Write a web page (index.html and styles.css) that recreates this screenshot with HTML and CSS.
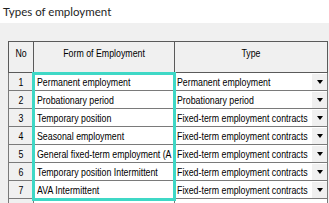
FILE: index.html
```html
<!DOCTYPE html>
<html lang="en">
<head>
    <meta charset="UTF-8">
    <title>Types of employment</title>
    <link rel="stylesheet" href="styles.css">
</head>
<body>

<!-- Section title -->
<div class="title">Types of employment</div>

<!-- Grid panel -->
<div class="panel">
    <div class="grid-wrap">
        <table class="grid">
            <colgroup>
                <col class="c-no">
                <col class="c-form">
                <col class="c-type">
            </colgroup>
            <thead>
                <tr>
                    <th><span class="nt">No</span></th>
                    <th><span class="nt">Form of Employment</span></th>
                    <th><span class="nt">Type</span></th>
                </tr>
            </thead>
            <tbody>
                <tr>
                    <td class="num"><span class="nt">1</span></td>
                    <td class="form"><span class="nt">Permanent employment</span></td>
                    <td><div class="combo"><span class="combo-text"><span class="nt">Permanent employment</span></span><span class="combo-btn"><i></i></span></div></td>
                </tr>
                <tr>
                    <td class="num"><span class="nt">2</span></td>
                    <td class="form"><span class="nt">Probationary period</span></td>
                    <td><div class="combo"><span class="combo-text"><span class="nt">Probationary period</span></span><span class="combo-btn"><i></i></span></div></td>
                </tr>
                <tr>
                    <td class="num"><span class="nt">3</span></td>
                    <td class="form"><span class="nt">Temporary position</span></td>
                    <td><div class="combo"><span class="combo-text"><span class="nt">Fixed-term employment contracts</span></span><span class="combo-btn"><i></i></span></div></td>
                </tr>
                <tr>
                    <td class="num"><span class="nt">4</span></td>
                    <td class="form"><span class="nt">Seasonal employment</span></td>
                    <td><div class="combo"><span class="combo-text"><span class="nt">Fixed-term employment contracts</span></span><span class="combo-btn"><i></i></span></div></td>
                </tr>
                <tr>
                    <td class="num"><span class="nt">5</span></td>
                    <td class="form"><span class="nt">General fixed-term employment (A</span></td>
                    <td><div class="combo"><span class="combo-text"><span class="nt">Fixed-term employment contracts</span></span><span class="combo-btn"><i></i></span></div></td>
                </tr>
                <tr>
                    <td class="num"><span class="nt">6</span></td>
                    <td class="form"><span class="nt">Temporary position Intermittent</span></td>
                    <td><div class="combo"><span class="combo-text"><span class="nt">Fixed-term employment contracts</span></span><span class="combo-btn"><i></i></span></div></td>
                </tr>
                <tr>
                    <td class="num"><span class="nt">7</span></td>
                    <td class="form"><span class="nt">AVA Intermittent</span></td>
                    <td><div class="combo"><span class="combo-text"><span class="nt">Fixed-term employment contracts</span></span><span class="combo-btn"><i></i></span></div></td>
                </tr>
                <tr>
                    <td class="num"></td>
                    <td class="form"></td>
                    <td></td>
                </tr>
            </tbody>
        </table>

        <!-- highlight frame around the form column -->
        <div class="highlight"></div>
    </div>
</div>

</body>
</html>
```

FILE: styles.css
```css
body {
    margin: 0;
    background-color: #fff;
    font-family: "Liberation Sans", Arial, sans-serif;
    font-size: 11px;
    color: #000;
    overflow: hidden;
}
.title {
    height: 23px;
    box-sizing: border-box;
    padding: 5px 0 0 3px;
    font-family: Lato, sans-serif;
    font-size: 11.5px;
    color: #1e1e1e;
}
.panel {
    background-color: #f0f0f0;
    padding: 18px 0 0 8px;
    height: 200px;
}
.grid-wrap {
    position: relative;
    width: 319px;
}
.grid {
    border-collapse: collapse;
    table-layout: fixed;
    width: 319px;
}
.c-no { width: 25px; }
.c-form { width: 141px; }
.c-type { width: 153px; }

/* narrow look of the grid font */
.nt {
    display: inline-block;
    transform: scaleX(0.8);
    transform-origin: left center;
    white-space: nowrap;
}
.grid th .nt,
.grid td.num .nt {
    transform-origin: center center;
}
.grid th {
    height: 31px;
    padding: 5px 0 0 0;
    box-sizing: border-box;
    vertical-align: top;
    font-weight: normal;
    background-color: #f0f0f0;
    border: 1px solid #5a5a5a;
    line-height: 13px;
}
.grid td {
    height: 17px;
    padding: 0;
    border: 1px solid #7a7a7a;
    background-color: #fff;
    white-space: nowrap;
    overflow: hidden;
    line-height: 16px;
}
.grid td.num {
    background-color: #f0f0f0;
    text-align: center;
}
.grid td.form {
    padding-left: 3px;
}
.combo {
    display: flex;
    align-items: center;
    height: 17px;
}
.combo-text {
    flex: 1;
    padding-left: 2px;
    overflow: hidden;
}
.combo-btn {
    width: 15px;
    height: 16px;
    background-color: #f0f0f0;
    display: flex;
    align-items: center;
    justify-content: center;
}
.combo-btn i {
    width: 0;
    height: 0;
    border-left: 3px solid transparent;
    border-right: 3px solid transparent;
    border-top: 4px solid #000;
}
.highlight {
    position: absolute;
    left: 24px;
    top: 31px;
    width: 138px;
    height: 123px;
    border: 3px solid #3fd8c6;
}
```
